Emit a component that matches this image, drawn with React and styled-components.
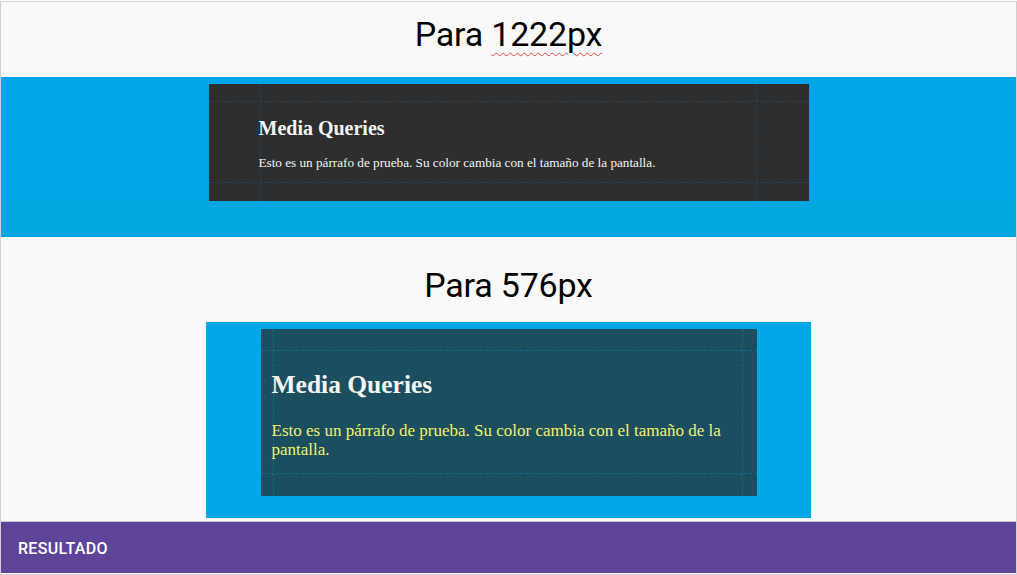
import React from "react";
import styled, { createGlobalStyle } from "styled-components";

const GlobalStyle = createGlobalStyle`
  html, body {
    margin: 0;
    padding: 0;
    background: #ffffff;
  }
  body {
    font-family: Roboto, "Liberation Sans", sans-serif;
  }
`;

const Frame = styled.div`
  box-sizing: border-box;
  width: 1017px;
  height: 574px;
  margin-top: 1px;
  border: 1px solid #cfcfd4;
  background: #f9f9f9;
  display: flex;
  flex-direction: column;
`;

const TitleRow = styled.div`
  height: ${(p) => p.h}px;
  display: flex;
  justify-content: center;
  align-items: flex-start;
  padding-top: ${(p) => p.top}px;
  box-sizing: border-box;
`;

const Title = styled.h2`
  margin: 0;
  font-family: Roboto, "Liberation Sans", sans-serif;
  font-weight: 400;
  font-size: 34px;
  line-height: 40px;
  color: #000;
  letter-spacing: -0.2px;
`;

const Misspelled = styled.span`
  text-decoration: underline wavy #e0403a;
  text-decoration-thickness: 1px;
  text-underline-offset: 6px;
`;

const WideBand = styled.div`
  height: 160px;
  background: linear-gradient(#00a5e7 0 124px, #00a7df 124px);
  display: flex;
  justify-content: center;
  align-items: flex-start;
  padding-top: 7px;
  box-sizing: border-box;
`;

const NarrowRow = styled.div`
  display: flex;
  justify-content: center;
`;

const NarrowBand = styled.div`
  width: 605px;
  height: 196px;
  background: #00a6e6;
  display: flex;
  justify-content: center;
  align-items: flex-start;
  padding-top: 7px;
  box-sizing: border-box;
`;

/* guide lines: g = [top, right, bottom, left] insets, drawn edge to edge */
const Card = styled.div`
  position: relative;
  box-sizing: border-box;
  width: ${(p) => p.w}px;
  height: ${(p) => p.h}px;
  background: ${(p) => p.bg};
  padding: ${(p) => p.pad};
  font-family: "Liberation Serif", "Times New Roman", serif;

  &::before,
  &::after {
    content: "";
    position: absolute;
    pointer-events: none;
    border: 0 dashed ${(p) => p.guideColor};
  }
  &::before {
    left: 0;
    right: 0;
    top: ${(p) => p.g[0]}px;
    bottom: ${(p) => p.g[2]}px;
    border-top-width: 1px;
    border-bottom-width: 1px;
  }
  &::after {
    top: 0;
    bottom: 0;
    right: ${(p) => p.g[1]}px;
    left: ${(p) => p.g[3]}px;
    border-left-width: 1px;
    border-right-width: 1px;
  }
`;

const CardHeading = styled.h1`
  position: relative;
  z-index: 1;
  margin: 0 0 ${(p) => p.gap}px;
  font-size: ${(p) => p.size}px;
  line-height: ${(p) => p.lh}px;
  font-weight: 700;
  color: #f4f4f4;
`;

const CardText = styled.p`
  position: relative;
  z-index: 1;
  margin: 0;
  font-size: ${(p) => p.size}px;
  line-height: ${(p) => p.lh}px;
  color: ${(p) => p.color};
`;

const Spacer = styled.div`
  height: 3px;
`;

const Footer = styled.div`
  height: 52px;
  box-sizing: border-box;
  border-top: 1px solid #c9c9cc;
  background: #5d4499;
  display: flex;
  align-items: center;
  padding: 2px 0 0 17px;
  color: #ffffff;
  font-family: Roboto, "Liberation Sans", sans-serif;
  font-weight: 500;
  font-size: 16px;
  letter-spacing: 0.3px;
`;

const sentence =
  "Esto es un párrafo de prueba. Su color cambia con el tamaño de la pantalla.";

export default function App() {
  return (
    <>
      <GlobalStyle />
      <Frame>
        <TitleRow h={75} top={12}>
          <Title>
            Para <Misspelled>1222px</Misspelled>
          </Title>
        </TitleRow>
        <WideBand>
          <Card
            w={600}
            h={117}
            bg="#2e2e2e"
            pad="32px 52px 0 50px"
            g={[17, 52, 18, 51]}
            guideColor="rgba(35, 75, 105, 0.75)"
          >
            <CardHeading size={20} lh={24} gap={15}>
              Media Queries
            </CardHeading>
            <CardText size={13.2} lh={16} color="#f4f4f4">
              {sentence}
            </CardText>
          </Card>
        </WideBand>
        <TitleRow h={85} top={28}>
          <Title>Para 576px</Title>
        </TitleRow>
        <NarrowRow>
          <NarrowBand>
            <Card
              w={496}
              h={167}
              bg="#1b4f5f"
              pad="41px 12px 0 11px"
              g={[21, 14, 22, 12]}
              guideColor="rgba(20, 115, 145, 0.75)"
            >
              <CardHeading size={25.5} lh={30} gap={21}>
                Media Queries
              </CardHeading>
              <CardText size={17} lh={19} color="#f2f26c">
                {sentence}
              </CardText>
            </Card>
          </NarrowBand>
        </NarrowRow>
        <Spacer />
        <Footer>RESULTADO</Footer>
      </Frame>
    </>
  );
}
